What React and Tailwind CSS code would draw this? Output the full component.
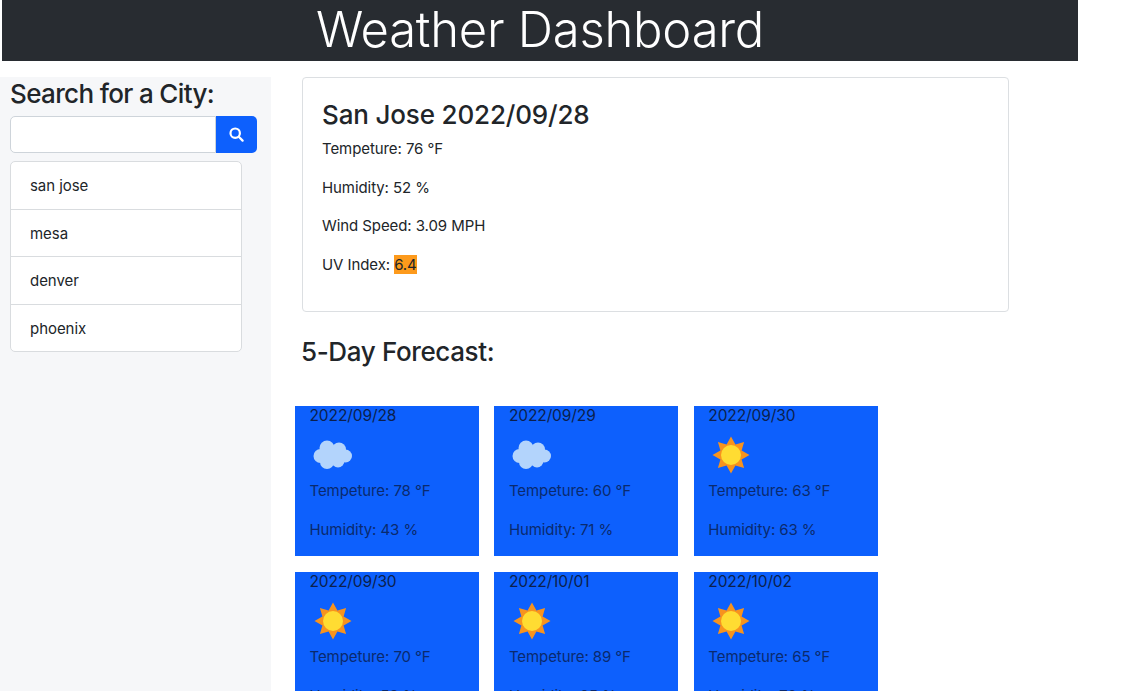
import React from "react";

const Cloud = () => (
  <svg width="42" height="32" viewBox="0 0 42 32" className="block">
    <g fill="#b3d4fc">
      <circle cx="8.5" cy="17" r="7" />
      <circle cx="15" cy="9" r="7.5" />
      <circle cx="27" cy="10.5" r="7" />
      <circle cx="33.5" cy="17" r="6.5" />
      <circle cx="15" cy="23" r="7" />
      <circle cx="26" cy="22" r="6.5" />
      <rect x="9" y="10" width="24" height="13" />
    </g>
  </svg>
);

const Sun = () => (
  <svg width="38" height="38" viewBox="0 0 38 38" className="block">
    <polygon
      fill="#f7931e"
      points="19,0.5 23.4,8.4 32.1,5.9 29.6,14.6 37.5,19 29.6,23.4 32.1,32.1 23.4,29.6 19,37.5 14.6,29.6 5.9,32.1 8.4,23.4 0.5,19 8.4,14.6 5.9,5.9 14.6,8.4"
    />
    <circle cx="19" cy="19" r="10" fill="#ffdc32" />
  </svg>
);

const days = [
  ["2022/09/28", "cloud", "78", "43"],
  ["2022/09/29", "cloud", "60", "71"],
  ["2022/09/30", "sun", "63", "63"],
  ["2022/09/30", "sun", "70", "58"],
  ["2022/10/01", "sun", "89", "25"],
  ["2022/10/02", "sun", "65", "70"],
];

const cities = ["san jose", "mesa", "denver", "phoenix"];

export default function App() {
  return (
    <div className="h-[691px] overflow-hidden bg-white text-[#212529] font-['Inter','Liberation_Sans',sans-serif]">
      <header className="ml-[2px] flex h-[61px] w-[1076px] items-center justify-center bg-[#282c31] pb-[2px] text-[49px] font-light leading-none tracking-[-0.25px] text-white">
        Weather Dashboard
      </header>
      <div className="mt-4 flex">
        <aside className="h-[614px] w-[271px] shrink-0 bg-[#f6f7f9] pl-[10px]">
          <h2 className="text-[26px] font-medium leading-[33px] tracking-[-0.65px]">Search for a City:</h2>
          <div className="mt-[6px] flex h-[37px] w-[247px]">
            <input
              aria-label="City"
              className="h-full min-w-0 flex-1 rounded-l-[5px] border border-[#ced4da] bg-white"
            />
            <button aria-label="Search" className="flex h-full w-[41px] items-center justify-center rounded-r-[5px] bg-[#0d60fd]">
              <svg width="15" height="15" viewBox="0 0 15 15" fill="none" stroke="white" strokeWidth="2.2" strokeLinecap="round">
                <circle cx="6.2" cy="6.2" r="4.7" />
                <path d="M9.8 9.8 13.6 13.6" />
              </svg>
            </button>
          </div>
          <ul className="mt-2 w-[232px] overflow-hidden rounded-[5px] border border-[#d9dcdf] bg-white">
            {cities.map((c, i) => (
              <li
                key={c}
                className={`flex items-center pl-[19px] pt-[2px] text-[15px] tracking-[-0.05px] ${i ? "h-[47.5px] border-t border-[#d9dcdf]" : "h-[46.5px]"}`}
              >
                {c}
              </li>
            ))}
          </ul>
        </aside>
        <main className="min-w-0 flex-1 pl-6">
          <section className="ml-[7px] h-[235px] w-[707px] rounded-[4px] border border-[#dcdfe2] pl-[19px] pt-[18px]">
            <h2 className="text-[26px] font-medium leading-[38px] tracking-[-0.16px]">San Jose 2022/09/28</h2>
            <div className="mt-[5px] flex flex-col gap-[19px] text-[15px] leading-[19.7px] tracking-[-0.08px]">
              <p>Tempeture: 76 °F</p>
              <p>Humidity: 52 %</p>
              <p>Wind Speed: 3.09 MPH</p>
              <p>
                UV Index: <span className="bg-[#fd9a1c]">6.4</span>
              </p>
            </div>
          </section>
          <h3 className="ml-[6px] mt-[22px] text-[26px] font-medium leading-[36px] tracking-[-0.37px]">5-Day Forecast:</h3>
          <div className="mt-[36px] grid w-[583px] grid-cols-[184px_184px_184px] gap-x-[15.4px] gap-y-4">
            {days.map(([date, icon, temp, hum], i) => (
              <article key={i} className="h-[150px] bg-[#0d60fd] pl-[14.5px] text-[15px] leading-[19px] tracking-[-0.08px] text-[#0a2a6e]">
                <div className="h-[19px] text-[15.5px] tracking-[-0.1px] text-[#0b1f4d]">{date}</div>
                <div className={`mt-[11px] flex h-[38px] items-center ${icon === "cloud" ? "pl-[2px]" : "pl-[4px]"}`}>
                  {icon === "cloud" ? <Cloud /> : <Sun />}
                </div>
                <p className="mt-[7px]">Tempeture: {temp} °F</p>
                <p className="mt-[20px]">Humidity: {hum} %</p>
              </article>
            ))}
          </div>
        </main>
      </div>
    </div>
  );
}
